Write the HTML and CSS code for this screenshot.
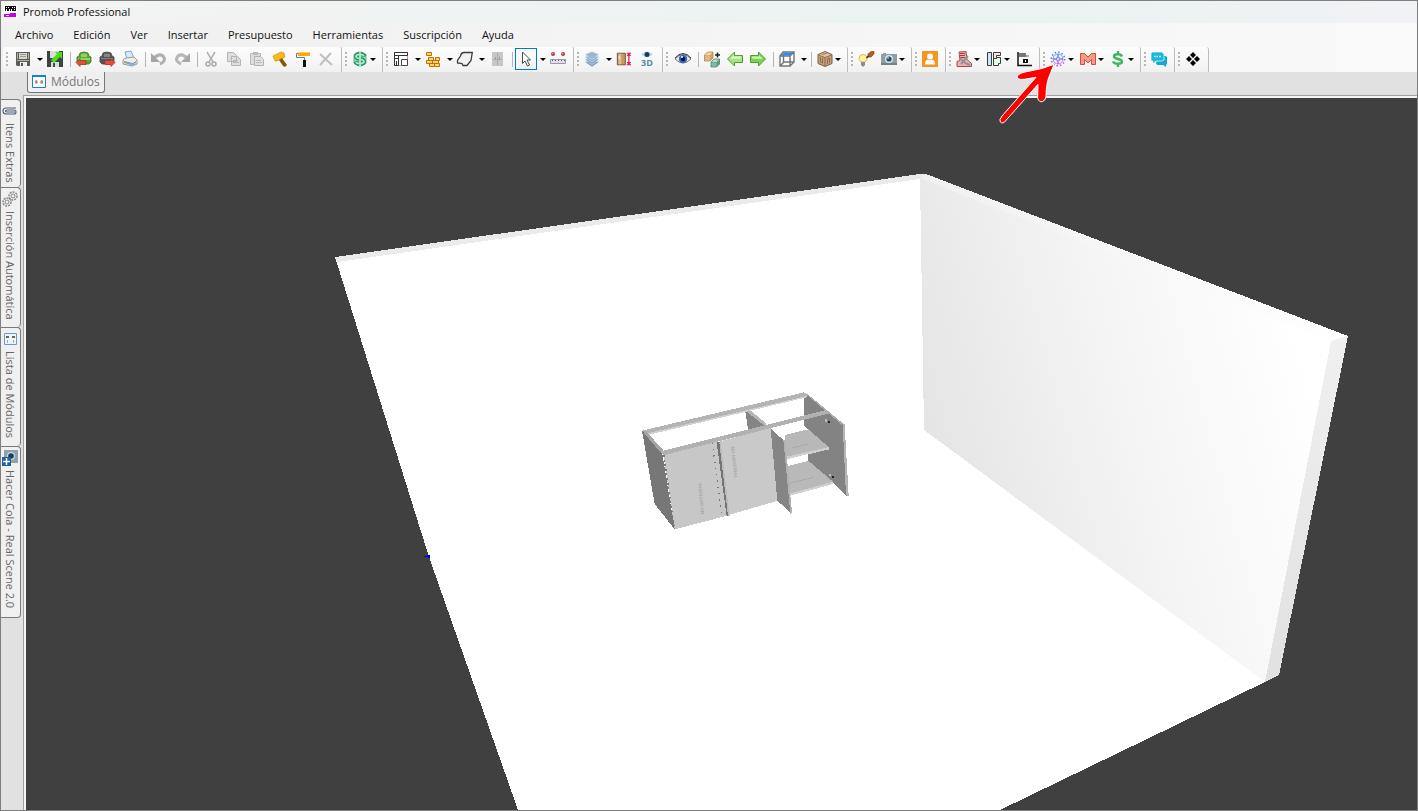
FILE: index.html
```html
<!DOCTYPE html>
<html lang="es">
<head>
<meta charset="utf-8">
<title>Promob Professional</title>
<link rel="stylesheet" href="styles.css">
</head>
<body>
<div class="window">
<header class="titlebar">
<svg class="app-icon" width="13" height="13" viewBox="0 0 13 13" shape-rendering="crispEdges"><path fill="#fff" d="M0 0h13v13H0z"/><path fill="#111" d="M1 1h11v5H1z"/><path fill="#fff" d="M2 2h1v1H2zM2 4h1v2H2zM4 2h1v1H4zM5 4h1v2H5zM7 4h1v2H7zM8 2h1v1H8zM10 2h1v1h-1zM10 4h1v1h-1z"/><path fill="#c300e8" d="M0 9h6V8h6v4H0z"/><path fill="#f5c8ff" d="M2 10h3v1H2z"/></svg>
<span>Promob Professional</span>
</header>
<nav class="menubar">
<button>Archivo</button><button>Edición</button><button>Ver</button><button>Insertar</button><button>Presupuesto</button><button>Herramientas</button><button>Suscripción</button><button>Ayuda</button>
</nav>
<div class="toolbars">
<div class="group group-wide"><i class="grip"></i>
<button class="tool split" aria-label="Guardar"><svg viewBox="0 0 16 16"><path fill="#5c5c58" d="M1 1h14v14H2l-1-1z"/><path fill="#d8d8cf" d="M4 2h8v6H4z"/><path stroke="#9a9a92" d="M5 3.500h6M5 5.500h6"/><path fill="#aeb0a4" d="M2 9h12v1H2zM2 2h1v6H2zM13 2h1v6h-1z"/><path fill="#eee" d="M5 11h7v4H5z"/><path fill="#555" d="M6 12h2v3H6z"/></svg><i class="caret"></i></button>
<button class="tool" aria-label="Guardar como"><svg viewBox="0 0 16 16"><path fill="#3f4245" d="M0 0h16v16H0z"/><path fill="#d5dfe0" d="M3 0h9v7H3zM4 11h8v5H4z"/><path fill="#4a4a4a" d="M6 12h2v4H6z"/><path fill="#52dc18" d="m4 9 6-6-2-2h7v7l-2-2-6 6z"/></svg></button>
<i class="sep"></i>
<button class="tool" aria-label="Importar"><svg viewBox="0 0 16 16"><path fill="#5aa832" stroke="#3c7426" stroke-width=".8" d="M4 2q4-2 8 0l1 3 2 1v5l-2 2H3l-2-2V6l2-1z"/><path fill="#8fd65a" d="M5 3q3-1 6 0v3H5zM2 7h12v2H2z"/><path fill="#e1503c" stroke="#a5382b" stroke-width=".8" d="m0 11.500 4-4v2h6v4H4v2z"/></svg></button>
<button class="tool" aria-label="Exportar"><svg viewBox="0 0 16 16"><path fill="#555" stroke="#444" stroke-width=".8" d="M4 2q4-2 8 0l1 3 2 1v5l-2 2H3l-2-2V6l2-1z"/><path fill="#858585" d="M5 3q3-1 6 0v3H5zM2 7h12v1H2z"/><path fill="#e1503c" stroke="#a5382b" stroke-width=".8" d="m16 11.500-4-4v2H6v4h6v2z"/></svg></button>
<button class="tool" aria-label="Imprimir"><svg viewBox="0 0 16 16"><path fill="#d7e9fb" stroke="#79a9d9" d="m3 1 6-1 3 7-7 1z"/><path fill="#eee" stroke="#999" d="m1 9 3-2 8-1 3 3v4l-5 2-9-2z"/><path fill="#999" d="m2 10 9 2 3-2v2l-4 2-8-2z"/><path fill="#76b5eb" d="m6 13 3-1 5 1-3 2z"/></svg></button>
<i class="sep"></i>
<button class="tool" aria-label="Deshacer"><svg viewBox="0 0 16 16"><path fill="none" stroke="#aeb0b2" stroke-width="3" d="M3 7q5-5 9-2 4 5-3 8"/><path fill="#a3a5a7" d="M0 2v9h9z"/></svg></button>
<button class="tool" aria-label="Rehacer"><svg viewBox="0 0 16 16"><path fill="none" stroke="#b4b6b8" stroke-width="3" d="M13 7Q8 2 4 5q-4 5 3 8"/><path fill="#a7a9ab" d="M16 2v9H7z"/></svg></button>
<i class="sep"></i>
<button class="tool" aria-label="Cortar"><svg viewBox="0 0 16 16"><path fill="none" stroke="#b2b2b2" stroke-width="1.500" d="m4 1 6 10M12 1 6 11"/><circle cx="5" cy="13" r="2" fill="none" stroke="#aaa" stroke-width="1.500"/><circle cx="11" cy="13" r="2" fill="none" stroke="#aaa" stroke-width="1.500"/></svg></button>
<button class="tool" aria-label="Copiar"><svg viewBox="0 0 16 16"><path fill="#ddd" stroke="#b5b5b5" d="M1.500 1.500h6l3 3v6h-9zM5.500 5.500h6l3 3v6h-9z"/><path stroke="#bbb" d="M7 9.500h5M7 11.500h6"/></svg></button>
<button class="tool" aria-label="Pegar"><svg viewBox="0 0 16 16"><path fill="#ddd" stroke="#b9b9b9" d="M1.500 2.500h10v11h-10z"/><path fill="#bbb" d="M4 1h5v3H4z"/><path fill="#e2e2e2" stroke="#b2b2b2" d="M5.500 5.500h6l3 3v6h-9z"/><path stroke="#bbb" d="M7 9.500h5M7 11.500h6"/></svg></button>
<button class="tool" aria-label="Martillo"><svg viewBox="0 0 16 16"><path fill="#f7b91c" stroke="#cb8900" stroke-width=".6" d="m1 5 8-4 3 1 1 4-8 4H3z"/><path fill="#8b5a08" d="m7 9 3-2 5 7-2 2-2-1z"/></svg></button>
<button class="tool" aria-label="Pintar"><svg viewBox="0 0 16 16"><path fill="#f5ac0a" d="M3 1h12v4H3z"/><path fill="#ffd04a" d="M3 1h12v1H3z"/><path fill="none" stroke="#777" d="M3 2.500H1.500v4h8V10"/><path fill="#111" d="M8 9h3v7H8z"/></svg></button>
<button class="tool" aria-label="Eliminar"><svg viewBox="0 0 16 16"><path stroke="#bfbfbf" stroke-width="2" d="m2 3 12 11M13 2 2 14"/></svg></button>
</div>
<div class="group"><i class="grip"></i>
<button class="tool drop" aria-label="Presupuesto"><svg viewBox="0 0 16 16"><path fill="#8cdfb3" stroke="#5fb98c" d="m8 .5 6 3v9l-6 3-6-3v-9z"/><path fill="none" stroke="#2d8a62" stroke-width="4" d="M12.500 5.500C11 2 4 2.500 4 5.500S12 7.500 12 10.500 5 14 3.500 10.500"/><path fill="none" stroke="#a9ecca" stroke-width="1.800" d="M12 5C10.500 2.500 4 3 4 5.500S12 8 12 10.500 5 13.500 4 11M8 0v16"/></svg><i class="caret"></i></button>
</div>
<div class="group"><i class="grip"></i>
<button class="tool split" aria-label="Paredes"><svg viewBox="0 0 16 16"><path fill="#fff" stroke="#e58a8a" d="M1.500 1.500h13v13h-13z"/><path fill="none" stroke="#333" d="M1.500 9V4.500h4v3h-4M3.500 14v-4M5.500 11V4.500h9v-3h-13v13h4V9"/><path fill="#fff" stroke="#444" d="M8.500 8.500h6v6h-6z"/></svg><i class="caret"></i></button>
<button class="tool split" aria-label="Ladrillos"><svg viewBox="0 0 16 16"><path fill="#ffd36a" stroke="#b8740b" d="M1.500 1.500h5v3h-5zM3.500 6.500h5v3h-5zM10.500 6.500h4v3h-4zM1.500 9.500h6v3h-6zM7.500 9.500h6v3h-6zM4.500 12.500h5v3h-5zM9.500 12.500h5v3h-5z"/></svg><i class="caret"></i></button>
<button class="tool split" aria-label="Forma"><svg viewBox="0 0 16 16"><path fill="#f2f2f2" stroke="#3d3d3d" stroke-width="1.300" d="M15.300 1.500H6.500Q4 2 3.500 5L.5 9.500v2.500l4.500.5 1 2h4l4-5z"/></svg><i class="caret"></i></button>
<button class="tool" aria-label="Armario"><svg viewBox="0 0 16 16"><path fill="#c7c7c7" d="M3 1h11v14H3z"/><path stroke="#aaa" d="M8.500 2v12M4 8.500h9"/><path stroke="#999" d="M6.500 6v2M10.500 6v2"/></svg></button>
<i class="sep"></i>
<button class="tool split picked" aria-label="Seleccionar"><svg viewBox="0 0 16 16"><path fill="#fff" stroke="#4d4d4d" d="m4.500 1 8 8H9l2.500 5-2 1L7 10l-2.500 2.500z"/></svg><i class="caret"></i></button>
<button class="tool" aria-label="Medir"><svg viewBox="0 0 16 16"><path fill="#dfdfed" stroke="#9999ac" d="M.500 8.500h15v4H.500z"/><path stroke="#555" stroke-dasharray="1 2" d="M2 9.500h13"/><circle cx="3" cy="3" r="2" fill="#b33b3b"/><circle cx="13" cy="3" r="2" fill="#b33b3b"/><circle cx="2.500" cy="2.500" r=".8" fill="#ef9696"/><circle cx="12.500" cy="2.500" r=".8" fill="#ef9696"/></svg></button>
</div>
<div class="group"><i class="grip"></i>
<button class="tool split" aria-label="Capas"><svg viewBox="0 0 16 16"><g fill="#7c9dc1" stroke="#dfe9f3" stroke-width=".6"><path d="m1 11 7-3 7 3-7 5z"/><path fill="#86a5c7" d="m1 8.500 7-3 7 3-7 5z"/><path fill="#8fadcd" d="m1 6 7-3 7 3-7 5z"/><path fill="#9bb7d4" d="m1 3.500 7-3 7 3-7 5z"/></g></svg><i class="caret"></i></button>
<button class="tool" aria-label="Altura de puerta"><svg viewBox="0 0 18 16"><path fill="#c39a67" stroke="#664c31" d="M1.500 1.500h9v13h-9z"/><path fill="#e0be91" d="M3 2h3v12H3z"/><path fill="#fff" d="M3 5h1v3H3z"/><path fill="none" stroke="#d4144d" stroke-width="1.300" d="M12 1.500h5M12 14.500h5M14.500 2v12m-2-9.500 2-2 2 2m-4 7 2 2 2-2"/></svg></button>
<button class="tool" aria-label="Vista 3D"><svg viewBox="0 0 16 16"><path fill="#b9dced" d="M2 3.500q6-6 12 0-6 5-12 0"/><circle cx="8" cy="3.500" r="2.500" fill="#173d5c"/><text x="8" y="15" text-anchor="middle" class="icon-label">3D</text></svg></button>
</div>
<div class="group group-wide"><i class="grip"></i>
<button class="tool" aria-label="Mostrar"><svg viewBox="0 0 16 16"><path fill="#e9eef5" stroke="#777" d="M0 8q8-9 16 0-8 8-16 0"/><circle cx="8" cy="8" r="4.200" fill="#3369bd"/><circle cx="8" cy="8" r="2.200" fill="#071431"/><circle cx="7" cy="6" r="1" fill="#fff"/><path fill="none" stroke="#383838" d="M0 7q8-9 16 0"/></svg></button>
<i class="sep"></i>
<button class="tool" aria-label="Agregar módulo"><svg viewBox="0 0 16 16"><path fill="#d2a263" stroke="#a77b48" stroke-width=".7" d="m.5 4 3-3H9v6l-3 3H.5z"/><path fill="#f1d5aa" d="m1 4 2.500-2.500h5L6 4z"/><path fill="#e2b67d" d="M1 4.500h5v5H1z"/><path fill="#5f9b7f" stroke="#397b61" stroke-width=".7" d="m7 11 3-3h5.500v5l-3 3H7z"/><path fill="#b4dcc7" d="m7.500 11 2.500-2.500h5L12.500 11z"/><path fill="#83bda1" d="M7.500 11.500h5v4h-5z"/><path stroke="#222" stroke-width="1.500" d="M11 4h5M13.500 1.500v5"/></svg></button>
<button class="tool" aria-label="Anterior"><svg viewBox="0 0 16 16"><path fill="#a5e481" stroke="#4e9e38" d="m.500 8 7-7v3.500h8v7h-8V15z"/><path fill="#d9f7ca" d="m3 8 4-4v1.500h7v2z"/></svg></button>
<button class="tool" aria-label="Siguiente"><svg viewBox="0 0 16 16"><path fill="#7bd24d" stroke="#4e9e38" d="m15.500 8-7-7v3.500h-8v7h8V15z"/><path fill="#c9f2b5" d="m13 8-4-4v1.500H2v2z"/></svg></button>
<i class="sep"></i>
<button class="tool split" aria-label="Vista superior"><svg viewBox="0 0 16 16"><path fill="#fff" stroke="#747474" stroke-width="1.400" d="m1 5 3-4h11v10l-4 4H1zM1 15l4-4h10M4.500 4v7M11 5v10M1 5h10l4-4"/><path fill="#338ced" d="m2 4.500 3-3h9.500l-3.500 3z"/></svg><i class="caret"></i></button>
<i class="sep"></i>
<button class="tool drop" aria-label="Madera"><svg viewBox="0 0 16 16"><path fill="#c5a078" stroke="#7d5f43" d="m8 .500 7 3v9l-7 3-7-3v-9z"/><path fill="#e0c39e" d="m2 4 6-3 6 3-6 2.500z"/><path fill="none" stroke="#7d6044" stroke-width=".8" d="M8 7v8M3.500 6v5l2 1V7m5 6V8l2-1v5M1.500 4 8 6.500 14.500 4M5 3.500l5-1.500"/></svg><i class="caret"></i></button>
</div>
<div class="group"><i class="grip"></i>
<button class="tool" aria-label="Iluminación"><svg viewBox="0 0 16 16"><path fill="#fff1a2" stroke="#dcbd55" d="M5 3.500q4 0 4 4Q9 9 7 11H3Q1 9 1 7.500q0-4 4-4"/><path fill="#8c8c8c" d="M3 11h4v3l-2 2-2-2z"/><path fill="#b8601c" stroke="#6e3a12" stroke-width=".6" d="m10 3 3-2.500h3V3l-3 3h-3z"/><path stroke="#3a2410" stroke-width="1.500" d="m8.500 7 2-2"/></svg></button>
<button class="tool drop" aria-label="Cámara"><svg viewBox="0 0 16 16"><path fill="#8fa0a4" d="M0 3h2V2h3v1h11v11H0z"/><path fill="#728287" d="M0 12h16v2H0z"/><circle cx="8" cy="8" r="4" fill="#d9e6ec"/><circle cx="8" cy="8" r="2.600" fill="#24506d"/><circle cx="7" cy="7" r=".8" fill="#fff"/></svg><i class="caret"></i></button>
</div>
<div class="group"><i class="grip"></i>
<button class="tool" aria-label="Usuario"><svg viewBox="0 0 16 16"><path fill="#f79320" d="M0 0h16v16H0z"/><circle cx="8" cy="5.500" r="3" fill="#fff"/><path fill="#fff" d="M3 13.500q0-4.500 3-5 2 1.500 4 0 3 .5 3 5z"/></svg></button>
</div>
<div class="group"><i class="grip"></i>
<button class="tool drop" aria-label="Informe"><svg viewBox="0 0 16 16"><path fill="#efb1ad" stroke="#a34c4e" d="m3 1 7-.5 1 8 4.500 4v3H1v-5l3-1z"/><path stroke="#b23a41" stroke-width="1.200" d="M4 2.500h5M4 4.500h5M4 6.500h5"/><path fill="none" stroke="#8d9499" stroke-width="2" d="m4 7 5 5 5 2M12 5l-7 8"/></svg><i class="caret"></i></button>
<button class="tool drop" aria-label="Paneles"><svg viewBox="0 0 16 16"><g stroke="#3b3b3b"><path fill="#c9e5ff" d="M1.500 1.500h4v13h-4z"/><path fill="#ffdfe6" d="M7.500 1.500h7v3h-4v3h-3z"/><path fill="#dfffe4" d="M7.500 7.500h3v-1h4v6h-2v2h-5z"/></g></svg><i class="caret"></i></button>
<button class="tool" aria-label="Gráfico"><svg viewBox="0 0 16 16"><path fill="none" stroke="#111" stroke-width="1.500" d="M2 1v13.500h14"/><path fill="#777" d="M3 2h7v4H3z"/><path fill="#aaa" d="M10 4h3v2h-3z"/><path fill="#111" d="M7 8h5v4H7z"/><path fill="#fff" d="M9 9h1v2H9z"/></svg></button>
</div>
<div class="group"><i class="grip"></i>
<button class="tool drop" aria-label="Configuración"><svg viewBox="0 0 16 16"><defs><linearGradient id="gear" x2="0" y2="1"><stop stop-color="#3b8bf2"/><stop offset="1" stop-color="#b95ae8"/></linearGradient></defs><g fill="none" stroke="url(#gear)" stroke-width=".8"><circle cx="8" cy="8" r="5"/><circle cx="8" cy="8" r="6.700" stroke-width="1.500" stroke-dasharray="1.500 2"/><circle cx="8" cy="8" r="1.500"/><path d="m8 3 1 4 4 1-4 1-1 4-1-4-4-1 4-1z"/></g></svg><i class="caret"></i></button>
<button class="tool drop" aria-label="Promob M"><svg viewBox="0 0 16 16"><path fill="#f39a80" stroke="#c9523f" stroke-linejoin="round" d="M.5 2.500h4L8 6l3.500-3.500h4v11h-4V8.500L8 12 4.500 8.500v5h-4z"/></svg><i class="caret"></i></button>
<button class="tool drop" aria-label="Precios"><svg viewBox="0 0 16 16"><path fill="none" stroke="#3cb55c" stroke-width="2.400" d="M12 5.500C11 2.500 4 2.500 4 5.500S12 7.500 12 10.500 4.500 13.500 3 10.500M8 0v3.500m0 9V16"/></svg><i class="caret"></i></button>
</div>
<div class="group"><i class="grip"></i>
<button class="tool" aria-label="Chat"><svg viewBox="0 0 16 16"><path fill="#16a9ce" d="M7 5h8l1 1v7l-1 1v2l-3-2H6l-1-2z"/><path fill="#18b8dd" stroke="#fff" stroke-width=".7" d="M1 1h10l2 2v6l-2 1H5l-3 3v-3H0V2z"/><path stroke="#e2faff" stroke-width="1.500" d="M3 5.500h1.500m1 0H7m1 0h2"/></svg></button>
</div>
<div class="group"><i class="grip"></i>
<button class="tool" aria-label="Complementos"><svg viewBox="0 0 16 16"><path d="m8 1 3 3-3 3-3-3zM4 5l3 3-3 3-3-3zm8 0 3 3-3 3-3-3zM8 9l3 3-3 3-3-3z"/></svg></button>
</div>
</div>
<main class="workspace">
<aside class="sidebar">
<button class="side-tab"><svg viewBox="0 0 16 16"><path fill="none" stroke="#4c5d79" stroke-width="1.100" d="M14 5H4Q1 5 1 8t3 3h8q2 0 2-2t-2-2H5q-1.500 0-1.500 1T5 9h8"/></svg><span>Itens Extras</span></button>
<button class="side-tab"><svg viewBox="0 0 16 16"><g fill="none" stroke="#888"><circle cx="11" cy="5" r="2"/><circle cx="11" cy="5" r="4" stroke-width="1.500" stroke-dasharray="2 1"/><circle cx="5" cy="11" r="2"/><circle cx="5" cy="11" r="4" stroke-width="1.500" stroke-dasharray="2 1"/></g></svg><span>Inserción Automática</span></button>
<button class="side-tab"><svg viewBox="0 0 16 16"><path fill="#edf5fc" stroke="#6e98c8" d="M2.500 2.500h12v11h-12z"/><path fill="#7b6338" d="M4 5h3v2H4zm6 0h3v2h-3z"/><path stroke="#8dacc9" d="M5.500 9v3m6-3v3"/></svg><span>Lista de Módulos</span></button>
<button class="side-tab"><svg viewBox="0 0 16 16"><path fill="#91a1a7" d="M2 0h14v13H2z"/><circle cx="9" cy="6" r="4" fill="#c9dce5"/><circle cx="9" cy="6" r="2.800" fill="#123e60"/><path fill="#1f5f9e" d="M0 7h9v9H0z"/><path stroke="#fff" stroke-width="1.500" d="M4.500 8v7M1 11.500h7"/></svg><span>Hacer Cola - Real Scene 2.0</span></button>
</aside>
<section class="content">
<div class="tab-strip"><button class="module-tab"><svg width="14" height="13" viewBox="0 0 14 13"><path fill="#fff" stroke="#1681dc" d="M.500.500h13v12H.500z"/><path fill="#1681dc" d="M0 0h14v2H0z"/><ellipse cx="4.300" cy="7" rx="1.500" ry="2" fill="#a8987c"/><ellipse cx="9.700" cy="7" rx="1.500" ry="2" fill="#a8987c"/></svg><span>Módulos</span></button></div>
<div class="viewport">
<svg class="scene" viewBox="26 98 1391 712" preserveAspectRatio="xMidYMin slice" shape-rendering="crispEdges" role="img" aria-label="Escena 3D">
<defs><linearGradient id="wall" gradientUnits="userSpaceOnUse" x1="920" y1="400" x2="1290" y2="300"><stop stop-color="#e5e5e5"/><stop offset=".5" stop-color="#f4f4f4"/><stop offset="1" stop-color="#fff"/></linearGradient>
<linearGradient id="wall-top"><stop stop-color="#f0f0f0"/><stop offset="1" stop-color="#fff"/></linearGradient>
<linearGradient id="wall-end" x2="0" y2="1"><stop stop-color="#f0f0f0"/><stop offset="1" stop-color="#e1e1e1"/></linearGradient></defs>
<path fill="#fff" d="m335 257 585-83h6l422 162-69 339-14 7-265 128v80H545l-27-80-89-253z"/>
<path fill="#ebebeb" d="m335 257 585-83h6l-6 5-583 83z"/>
<path fill="url(#wall)" d="m920 178 411 162-66 342-341-252z"/>
<path fill="url(#wall-top)" d="m920 178 6-4 422 162-17 5z"/>
<path fill="url(#wall-end)" d="m1348 336-69 339-14 7 66-341z"/>
<path fill="#0000e8" d="M424 556h3v-1h3v3h-2v-1h-4z"/>
<g transform="translate(620 380) scale(.333333)">
<path fill="#838383" d="m552 50 14-4 102 84 12 218-40-38-75-68v-94l-13-12z"/>
<path fill="#b8b8b8" d="m494 165 71-17 63 55-128 32z"/><path fill="#d0d0d0" d="m500 230 128-29v7l-128 30z"/>
<path fill="#fff" d="m500 238 65-16v21l-62 15z"/>
<path fill="#b9b9b9" d="m503 258 63-15 74 63-130 40z"/><path fill="#d0d0d0" d="m510 340 130-35v7l-130 35z"/>
<path fill="#858585" d="m376 94 12-4 52 44-56 15z"/>
<path fill="#b5b5b5" d="m376 92 12-4 52 44-8 4z"/>
<path fill="#777" d="m66 152 60 64 38 232-60-76z"/>
<path fill="#b4b4b4" d="m66 152 486-115 16 9-490 116z"/><path fill="#d1d1d1" d="m82 160 478-112v4L84 165z"/>
<path fill="#a6a6a6" d="m66 152 11 1 54 58-8 8z"/>
<path fill="#c7c7c7" d="m130 222 162-39 30 224-158 41z"/>
<path fill="#c9c9c9" d="m300 184 152-40 22 218-148 43z"/>
<path fill="#747474" d="m290 188 10-2 28 222-8 1z"/><path fill="#bbb" d="m298 188 4-2 27 222h-5z"/>
<path fill="#b1b1b1" d="m122 214 496-124 14 9-502 127z"/>
<path fill="#858585" d="m452 146 38 34 24 220-42-38z"/><path fill="#b2b2b2" d="m490 180 6 2 20 216-5 3z"/>
<path fill="#b5b5b5" d="m668 130 6 3 12 215-8-3z"/><path fill="#aaa" d="m558 43 8 2 104 86-4 4z"/>
<path fill="none" stroke="#777" stroke-width="5" stroke-dasharray="6 8" d="m131 225 31 218"/>
<path fill="none" stroke="#777" stroke-width="4" stroke-dasharray="4 15" d="m277 188 28 216"/>
<path fill="#222" d="M625 124h6v6h-6zm12 163h6v7h-6z"/><path fill="#bbb" d="M616 118h6v8h-6zm12 163h5v7h-5z"/>
<path fill="none" stroke="#a9a9a9" stroke-width="3" d="m518 204 46-12m-60 119 74-18"/>
<text class="material" transform="translate(333 200) rotate(84)">NO MATERIAL</text>
<text class="material" transform="translate(253 402) rotate(264)">NO MATERIAL</text>
</g>
</svg>
</div>
</section>
</main>
<svg class="arrow" width="60" height="66" viewBox="54 60 180 198" aria-hidden="true"><path fill="#f00" stroke="#fff" stroke-width="3" stroke-linejoin="round" d="M222 73Q185 88 150 93q-32 5-38 15-3 12 20 10l36-6L66 228q-10 12-5 18 8 8 18-6l95-107-1 42q4 12 14 10 10-3 11-16 0-40 12-66z"/></svg>
</div>
</body>
</html>
```
FILE: styles.css
```css
* { box-sizing: border-box; }
html, body { height: 100%; }
body { margin: 0; font-family: "Open Sans", "Noto Sans", sans-serif; font-size: 12px; color: #111; }
button { border: 0; padding: 0; margin: 0; background: none; font: inherit; color: inherit; }
.window { position: relative; display: flex; flex-direction: column; height: 100vh; border: 1px solid #7f7f7f; background: #e1e1e1; overflow: hidden; }
.titlebar { display: flex; align-items: center; gap: 6px; height: 22px; padding: 0 0 2px 3px; font-size: 11px; background: linear-gradient(90deg, #f3f3f3, #f0f3f3 30%, #eaf3f2 70%, #f1f2f5); }
.menubar { display: flex; align-items: center; gap: 20px; height: 24px; padding: 0 0 2px 14px; font-size: 11px; background: linear-gradient(90deg, #f0f0f0, #f9f9f9); }
.toolbars { display: flex; height: 25px; padding-left: 2px; background: linear-gradient(90deg, #f0f0f0, #f9f9f9); }
.group { display: flex; align-items: flex-start; padding: 1px 3px 0 0; border-right: 1px solid #bdbdbd; border-radius: 3px 3px 0 3px; background: linear-gradient(#fdfdfd, #f1f1f1); }
.grip { flex: none; width: 2px; height: 14px; margin: 4px 2px 0 3px; background: repeating-linear-gradient(#b5b5b5 0 2px, transparent 2px 4px); }
.group-wide .grip { margin-right: 4px; }
.tool { display: flex; align-items: center; flex: none; width: 23px; height: 22px; padding-left: 3px; }
.tool svg { flex: none; width: 16px; height: 16px; overflow: visible; }
.caret { flex: none; margin-left: 2px; border: solid transparent; border-width: 3px 3px 0; border-top-color: #000; }
.drop { width: 30px; }
.split { width: 32px; }
.split .caret { margin-left: 6px; }
.picked { background: linear-gradient(#0078d7, #0078d7) 0 0 / 22px 1px no-repeat, linear-gradient(#0078d7, #0078d7) 0 100% / 22px 1px no-repeat, linear-gradient(#0078d7, #0078d7) 0 0 / 1px 22px no-repeat, linear-gradient(#0078d7, #0078d7) 21px 0 / 1px 22px no-repeat; }
.sep { flex: none; width: 1px; height: 15px; margin: 4px 2px 0 3px; background: #b5b5b5; }
.icon-label { font: bold 9px "Open Sans", sans-serif; fill: #5389a8; }
.workspace { display: flex; flex: 1; min-height: 0; }
.sidebar { display: flex; flex-direction: column; align-items: flex-start; flex: none; width: 22px; padding-top: 27px; }
.side-tab { display: flex; flex-direction: column; align-items: center; gap: 4px; width: 20px; padding: 3px 2px 8px 0; border: solid #7a7a7a; border-width: 1px 1px 0 0; border-radius: 0 4px 4px 0; background: #f0f0f0; color: #666; font-size: 11px; }
.side-tab:first-child { padding-bottom: 4px; }
.side-tab:last-child { border-bottom-width: 1px; }
.side-tab svg { width: 16px; height: 16px; }
.side-tab span { writing-mode: vertical-rl; line-height: 16px; }
.content { display: flex; flex: 1; flex-direction: column; min-width: 0; }
.tab-strip { height: 23px; padding-left: 4px; }
.module-tab { display: flex; align-items: center; gap: 5px; height: 21px; padding: 0 4px 1px 4px; border: 1px solid #777; border-top: 0; border-radius: 0 0 3px 3px; background: #f0f0f0; color: #777; }
.viewport { flex: 1; min-height: 0; border: solid #a0a0a0; border-width: 1px 0 0 1px; padding: 2px 0 0 2px; background: #f4f4f4; }
.scene { display: block; width: 100%; height: 100%; background: #404040; }
.material { font: bold 14px "Liberation Sans", sans-serif; fill: #aaa; }
.arrow { position: absolute; left: 997px; top: 59px; }
```
